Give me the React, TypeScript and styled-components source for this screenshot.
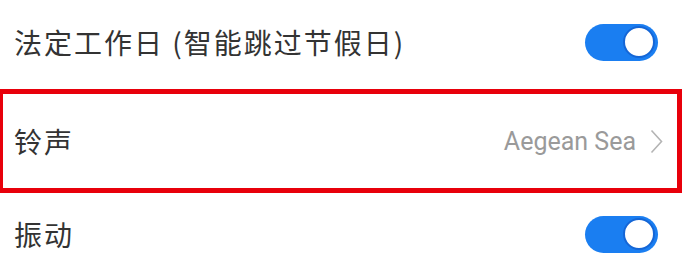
import styled, { createGlobalStyle } from 'styled-components';

const GlobalStyle = createGlobalStyle`
  body {
    margin: 0;
    background: #ffffff;
    font-family: "Noto Sans CJK SC", "Noto Sans", sans-serif;
  }
`;

const List = styled.div`
  display: flex;
  flex-direction: column;
  width: 687px;
  height: 274px;
  overflow: hidden;
  background: #fff;
`;

const Row = styled.div<{ $height: number; $highlight?: boolean }>`
  display: flex;
  align-items: center;
  justify-content: space-between;
  box-sizing: border-box;
  height: ${(p) => p.$height}px;
  flex-shrink: 0;
  padding: 0 29px 0 14px;

  ${(p) =>
    p.$highlight &&
    `
    width: 682px;
    margin-top: 5px;
    border: 5px solid #e8000b;
    border-left-width: 3px;
    padding: 0 14px 0 11px;
  `}
`;

const Label = styled.span`
  font-size: 28px;
  letter-spacing: 2px;
  color: #333333;
  line-height: 1;
`;

const Value = styled.div`
  display: flex;
  align-items: center;
  gap: 14px;
  font-family: Roboto, "Noto Sans", sans-serif;
  font-size: 25px;
  color: #9a9a9a;
`;

const Track = styled.div<{ $on: boolean }>`
  display: flex;
  align-items: center;
  justify-content: ${(p) => (p.$on ? 'flex-end' : 'flex-start')};
  box-sizing: border-box;
  width: 73px;
  height: 37px;
  padding: 0 3px;
  border-radius: 19px;
  background: ${(p) => (p.$on ? '#1a7ef1' : '#d0d0d0')};
`;

const Knob = styled.div`
  width: 32px;
  height: 32px;
  box-sizing: border-box;
  border-radius: 50%;
  background: #ffffff;
  border: 2px solid #1566d6;
`;

function Toggle({ on }: { on: boolean }) {
  return (
    <Track $on={on}>
      <Knob />
    </Track>
  );
}

function Chevron() {
  return (
    <svg width="13" height="25" viewBox="0 0 13 25">
      <path d="M1.5 1.5 L11.5 12.5 L1.5 23.5" fill="none" stroke="#b4b4b4" strokeWidth="1.6" />
    </svg>
  );
}

export default function App() {
  return (
    <>
      <GlobalStyle />
      <List>
        <Row $height={84}>
          <Label>法定工作日 (智能跳过节假日)</Label>
          <Toggle on />
        </Row>
        <Row $height={104} $highlight>
          <Label>铃声</Label>
          <Value>
            Aegean Sea
            <Chevron />
          </Value>
        </Row>
        <Row $height={82}>
          <Label>振动</Label>
          <Toggle on />
        </Row>
      </List>
    </>
  );
}
